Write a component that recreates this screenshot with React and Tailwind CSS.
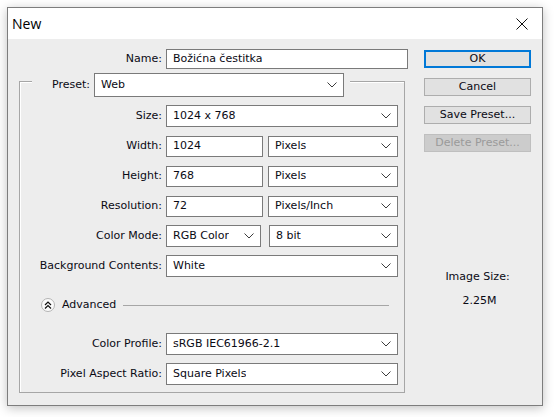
import React from 'react';

const Chevron = () => (
  <svg width="10" height="6" viewBox="0 0 10 6" className="shrink-0">
    <path d="M0.5 0.5 L5 5 L9.5 0.5" fill="none" stroke="#3c3c3c" strokeWidth="1" />
  </svg>
);

const Select = ({ value, className = '' }) => (
  <div className={`flex items-center justify-between bg-white border border-[#7a7a7a] pl-[6px] pr-[6px] ${className}`}>
    <span className="truncate">{value}</span>
    <Chevron />
  </div>
);

const Input = ({ value, className = '' }) => (
  <div className={`flex items-center bg-white border border-[#7a7a7a] pl-[6px] ${className}`}>
    <span>{value}</span>
  </div>
);

const Row = ({ label, children, className = '' }) => (
  <div className={`flex items-center h-[22px] ${className}`}>
    <div className="w-[142px] text-right">{label}</div>
    <div className="ml-[4px] flex items-center h-full">{children}</div>
  </div>
);

const Button = ({ children, primary, disabled }) => (
  <div
    className={`h-[18px] w-[107px] flex items-center justify-center ${
      primary
        ? 'border-2 border-[#0078d7] bg-[#e1e1e1]'
        : disabled
        ? 'border border-[#bfbfbf] bg-[#cccccc] text-[#9a9a9a]'
        : 'border border-[#adadad] bg-[#e1e1e1]'
    }`}
  >
    {children}
  </div>
);

export default function App() {
  return (
    <div className="w-[554px] h-[417px] bg-white pt-[7px] pl-[7px] font-['DejaVu_Sans',Verdana,sans-serif] text-[11px] leading-[14px] text-[#0a0a14]">
      <div className="w-[536px] h-[399px] border border-[#7d7d7d] bg-[#ededed] shadow-[0_2px_10px_rgba(0,0,0,0.25)] flex flex-col">
        {/* Title bar */}
        <div className="h-[31px] bg-white flex items-center justify-between pl-[4px] pr-[14px]">
          <span className="font-['Open_Sans',sans-serif] text-[14px] leading-[18px] text-black">New</span>
          <svg width="12" height="12" viewBox="0 0 12 12">
            <path d="M0.5 0.5 L11.5 11.5 M11.5 0.5 L0.5 11.5" stroke="#111" strokeWidth="1" />
          </svg>
        </div>

        {/* Body */}
        <div className="flex pl-[11px]">
          {/* Left column */}
          <div className="w-[389px] pt-[10px]">
            <div className="flex items-center h-[20px]">
              <div className="w-[143px] text-right">Name:</div>
              <Input value="Božićna čestitka" className="ml-[4px] w-[242px] h-[20px]" />
            </div>

            <div className="w-[386px] mt-[4px]">
              {/* Preset row on top of group border */}
              <div className="flex h-[24px]">
                <div className="w-[13px] h-[16px] self-end border-l border-t border-[#a6a6a6] shadow-[inset_1px_1px_0_#fff]" />
                <div className="w-[58px] text-right self-center">Preset:</div>
                <Select value="Web" className="ml-[4px] w-[250px] h-[24px]" />
                <div className="ml-[6px] flex-1 h-[16px] self-end border-t border-r border-[#a6a6a6] shadow-[inset_0_1px_0_#fff]" />
              </div>

              <div className="border-l border-r border-b border-[#a6a6a6] shadow-[inset_1px_0_0_#fff] pt-[8px] pb-[7px] flex flex-col gap-[8px]">
                <Row label="Size:">
                  <Select value="1024 x 768" className="w-[232px] h-[22px]" />
                </Row>
                <Row label="Width:">
                  <Input value="1024" className="w-[97px] h-[21px]" />
                  <Select value="Pixels" className="ml-[5px] w-[130px] h-[21px]" />
                </Row>
                <Row label="Height:">
                  <Input value="768" className="w-[97px] h-[21px]" />
                  <Select value="Pixels" className="ml-[5px] w-[130px] h-[21px]" />
                </Row>
                <Row label="Resolution:">
                  <Input value="72" className="w-[97px] h-[21px]" />
                  <Select value="Pixels/Inch" className="ml-[5px] w-[130px] h-[21px]" />
                </Row>
                <Row label="Color Mode:">
                  <Select value="RGB Color" className="w-[95px] h-[22px]" />
                  <Select value="8 bit" className="ml-[8px] w-[129px] h-[22px]" />
                </Row>
                <Row label="Background Contents:">
                  <Select value="White" className="w-[232px] h-[22px]" />
                </Row>

                <div className="flex items-center h-[14px] mt-[13px] pl-[21px] pr-[15px]">
                  <div className="w-[14px] h-[14px] rounded-full border border-[#b4b4b4] bg-[#fbfbfb] flex items-center justify-center">
                    <svg width="8" height="8" viewBox="0 0 8 8">
                      <path d="M1 4 L4 1 L7 4 M1 7.5 L4 4.5 L7 7.5" fill="none" stroke="#111" strokeWidth="1.2" />
                    </svg>
                  </div>
                  <span className="ml-[7px]">Advanced</span>
                  <div className="ml-[7px] flex-1 h-px bg-[#a6a6a6]" />
                </div>

                <Row label="Color Profile:" className="mt-[13px]">
                  <Select value="sRGB IEC61966-2.1" className="w-[232px] h-[22px]" />
                </Row>
                <Row label="Pixel Aspect Ratio:">
                  <Select value="Square Pixels" className="w-[232px] h-[22px]" />
                </Row>
              </div>
            </div>
          </div>

          {/* Right column */}
          <div className="ml-[16px] w-[107px] pt-[11px] flex flex-col items-center">
            <div className="flex flex-col gap-[10px]">
              <Button primary>OK</Button>
              <Button>Cancel</Button>
              <Button>Save Preset...</Button>
              <Button disabled>Delete Preset...</Button>
            </div>
            <div className="mt-[118px] text-center">Image Size:</div>
            <div className="mt-[10px] text-center pl-[4px]">2.25M</div>
          </div>
        </div>
      </div>
    </div>
  );
}
